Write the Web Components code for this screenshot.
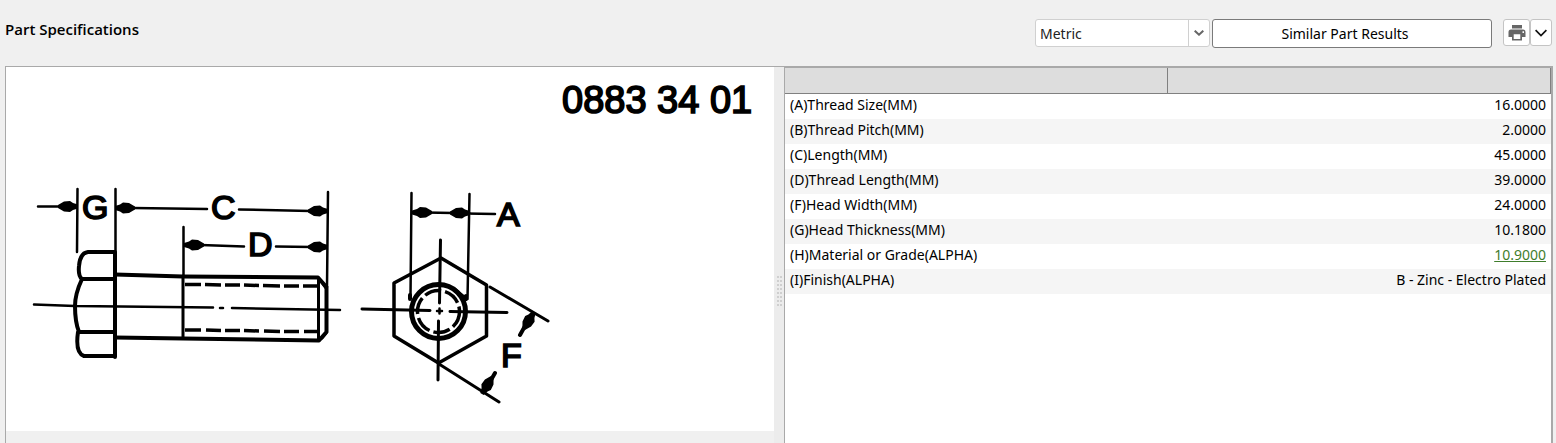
<!DOCTYPE html>
<html lang="en">
<head>
<meta charset="utf-8">
<title>Part Specifications</title>
<style>
    body {
        margin: 0;
        background: #f0f0f0;
        color: #000;
        font: 14px/20px "Noto Sans", sans-serif;
    }
</style>
</head>
<body>
<part-page>
    <spec-toolbar slot="toolbar">Part Specifications</spec-toolbar>
    <bolt-drawing slot="drawing" number="0883 34 01"></bolt-drawing>
    <spec-table slot="specs"></spec-table>
</part-page>

<script>
class PartPage extends HTMLElement {

    constructor() {
        super();
        this.attachShadow({ mode: "open" }).innerHTML = `
        <style>
            :host {
                display: flex;
                flex-direction: column;
                height: 100vh;
                overflow: hidden;
            }

            .split {
                flex: 1;
                display: grid;
                grid-template-columns: 1fr 10px 1fr;
                margin: 0 3px 0 5px;
                border: 1px solid #a9a9a9;
                border-bottom: 0;
                min-height: 0;
            }

            .splitter {
                display: grid;
                place-content: center;
                padding-top: 72px;
                background: #ececec;
            }

            .grip {
                display: grid;
                grid-template-columns: 2px 2px;
                grid-auto-rows: 2px;
                gap: 2px 1px;
            }

            .grip i {
                background: #cfcfcf;
            }
        </style>
        <slot name="toolbar"></slot>
        <main class="split">
            <slot name="drawing"></slot>
            <div class="splitter"><div class="grip">${"<i></i>".repeat(16)}</div></div>
            <slot name="specs"></slot>
        </main>`;
    }
}

class SpecToolbar extends HTMLElement {

    constructor() {
        super();
        this.attachShadow({ mode: "open" }).innerHTML = `
        <style>
            * {
                box-sizing: border-box;
            }

            :host {
                display: flex;
                justify-content: space-between;
                align-items: flex-start;
                height: 66px;
                padding: 19px 4px 0 5px;
                box-sizing: border-box;
            }

            h1 {
                margin: 0;
                font: 600 15px/20px "Open Sans", sans-serif;
            }

            .tools {
                display: flex;
                gap: 2px;
            }

            .units {
                display: grid;
                grid-template-columns: 1fr 21px;
                width: 175px;
                height: 28px;
                border: 1px solid #d0d0d0;
                border-radius: 3px;
                background: #fff;
            }

            select {
                grid-area: 1 / 1 / 2 / 3;
                appearance: none;
                border: 0;
                padding: 2px 24px 0 4px;
                background: none;
                color: #222;
                font: inherit;
            }

            .arrow {
                grid-area: 1 / 2;
                display: grid;
                place-items: center;
                border-left: 1px solid #d0d0d0;
                pointer-events: none;
            }

            button {
                display: grid;
                place-items: center;
                padding: 0;
                border: 1px solid #c4c4c4;
                border-radius: 3px;
                background: #fff;
                color: #000;
                font: inherit;
            }

            .similar {
                width: 280px;
                height: 29px;
                padding-right: 14px;
                border-color: #7a7a7a;
            }

            .print {
                display: flex;
                margin-left: 9px;
            }

            .print button {
                width: 22px;
                height: 27px;
            }

            .print button:first-child {
                width: 27px;
            }
        </style>
        <h1><slot></slot></h1>
        <div class="tools">
            <div class="units">
                <select aria-label="Units"><option>Metric</option><option>Inch</option></select>
                <span class="arrow">
                    <svg width="10" height="6" fill="none" stroke="#666" stroke-width="2"><path d="M.7.7 5 4.700 9.300.7"/></svg>
                </span>
            </div>
            <button class="similar">Similar Part Results</button>
            <div class="print">
                <button aria-label="Print">
                    <svg width="18" height="16" viewBox="0 0 18 16" fill="#666">
                        <path d="M4 0h10v3.500H4z"/>
                        <path fill-rule="evenodd" d="M3 4.500h12a2.500 2.500 0 0 1 2.500 2.500v5H14v3.500H4V12H.5V7A2.500 2.500 0 0 1 3 4.500zM5.700 9.300v4.700h6.600V9.300zM14.500 6.300v1.700h1.500V6.300z"/>
                    </svg>
                </button>
                <button aria-label="Print options">
                    <svg width="12" height="8" fill="none" stroke="#111" stroke-width="1.700"><path d="m.6 1.200 5.400 5.300 5.400-5.300"/></svg>
                </button>
            </div>
        </div>`;
    }
}

class BoltDrawing extends HTMLElement {

    connectedCallback() {
        this.attachShadow({ mode: "open" }).innerHTML = `
        <style>
            :host {
                display: block;
                min-width: 0;
            }

            svg {
                display: block;
                width: 100%;
                background: #fff;
            }

            .ink {
                fill: none;
                stroke: #000;
                stroke-width: 3;
                stroke-linecap: round;
                stroke-linejoin: round;
            }

            .thin {
                stroke-width: 2.500;
            }

            .thick {
                stroke-width: 4;
            }

            .dashes {
                stroke-linecap: butt;
                stroke-width: 3.500;
            }

            text {
                font: 34px "Liberation Sans", sans-serif;
                stroke: #000;
                stroke-width: 1.700;
            }

            .number {
                font-size: 38px;
            }
        </style>
        <svg viewBox="6 67 768 364" role="img" aria-label="Hex bolt dimensions">
            <defs>
                <path id="tip" d="M0-2 5-3.500 8-5.500 14-5 20-1.500V1.500L14 5 8 5.500 5 3.500 0 2z"/>
            </defs>
            <text class="number" x="562" y="113">${this.getAttribute("number")}</text>

            <!-- side view -->
            <g class="ink">
                <path class="thick" d="M115 252H88Q80 253 79 266 78 276 82 279H115M82 279Q75 294 75 306 75 322 79 332H115M78 332Q75 353 84 356H115M115 252V357"/>
                <path class="thick" d="M115 274.500 183 276.500 318 277.500 326.500 287V332L319 340.500 183 338.500 115 337.500"/>
                <path d="M318.500 278V340M183 276V338"/>
                <path class="dashes" d="M185 284.500h16m4 0 16 .5m4 0h15m4 0 15 .5m4 0 17 .5m4 0h15m4 0h17M185 330h16m5 0 15 .5m4 0h15m4 0 15 .5m5 0 16 .5m4 0h15m5 0h16"/>
                <path class="thin" d="M34 304.500 75 306 213 307.500M220 308h3M232 308 340 310"/>
                <path class="thin" d="M77.500 189 77 252M115.500 189V252M328 192 327 287M183.500 227V276"/>
                <path class="thin" d="M38 206.500H60M133 208 207 209M239 209.500 310 211M201 245 244 246.500M276 246.500 312 247"/>
                <path d="M320 280 326 288M322 338 326 333"/>
            </g>
            <use href="#tip" transform="translate(78 206.500) rotate(180)"/>
            <use href="#tip" transform="translate(115 208)"/>
            <use href="#tip" transform="translate(328 211) rotate(180)"/>
            <use href="#tip" transform="translate(184 245)"/>
            <use href="#tip" transform="translate(328 247) rotate(180)"/>
            <text x="82" y="219">G</text>
            <text x="211" y="219">C</text>
            <text x="248" y="256">D</text>

            <!-- end view -->
            <g class="ink">
                <path d="M441 258 486.500 285V336L438.500 363 394 336V283z" stroke-width="3.500"/>
                <circle cx="438.500" cy="311.500" r="27" stroke-width="5"/>
                <circle class="dashes" cx="438.500" cy="311.500" r="21" stroke-dasharray="17 4"/>
                <path d="M440.500 240 439.500 303M438.500 321 438 380M362 309 430 310.500M450 311.500 507 312.500M439.500 311h.1M439 364 499 402M490 287 548 321"/>
                <path class="thin" d="M411.500 193 410.500 297M469.500 194 467.500 299M425 212.500 453 213M465 213.500 495 214M437 311h5M439.500 308.500v5"/>
                <path class="thick" d="M410 295v4M455 290l11 9V296M520 335 525 326M495 373 491 380"/>
            </g>
            <use href="#tip" transform="translate(412 212.500)"/>
            <use href="#tip" transform="translate(470 213) rotate(180)"/>
            <use href="#tip" transform="translate(534 312) rotate(121)"/>
            <use href="#tip" transform="translate(482 394) rotate(-59)"/>
            <text x="497" y="226">A</text>
            <text x="501" y="367">F</text>
        </svg>`;
    }
}

class SpecTable extends HTMLElement {

    constructor() {
        super();
        this.rows = [
            ["(A)Thread Size(MM)", "16.0000"],
            ["(B)Thread Pitch(MM)", "2.0000"],
            ["(C)Length(MM)", "45.0000"],
            ["(D)Thread Length(MM)", "39.0000"],
            ["(F)Head Width(MM)", "24.0000"],
            ["(G)Head Thickness(MM)", "10.1800"],
            ["(H)Material or Grade(ALPHA)", `<a href="#grade">10.9000</a>`],
            ["(I)Finish(ALPHA)", "B - Zinc - Electro Plated"]
        ];
        this.attachShadow({ mode: "open" });
        this.render();
    }

    render() {
        this.shadowRoot.innerHTML = `
        <style>
            :host {
                display: block;
                min-width: 0;
                border: 1px solid #a9a9a9;
                border-bottom: 0;
                background: #fff;
            }

            table {
                width: 100%;
                table-layout: fixed;
                border-collapse: separate;
                border-spacing: 0;
            }

            thead th {
                height: 25px;
                padding: 0;
                background: #ddd;
                border: solid #808080;
                border-width: 0 1px 1px 0;
            }

            tbody th, td {
                height: 25px;
                padding: 0 5px 4px;
                box-sizing: border-box;
                font-weight: normal;
                text-align: left;
            }

            td {
                text-align: right;
            }

            tbody tr:nth-child(even) {
                background: #f5f5f5;
            }

            a {
                color: #3f7d2c;
            }
        </style>
        <table aria-label="Specifications">
            <thead><tr><th></th><th></th></tr></thead>
            <tbody>
                ${this.rows.map(([name, value]) => `<tr><th scope="row">${name}</th><td>${value}</td></tr>`).join("")}
            </tbody>
        </table>`;
    }
}

customElements.define("part-page", PartPage);
customElements.define("spec-toolbar", SpecToolbar);
customElements.define("bolt-drawing", BoltDrawing);
customElements.define("spec-table", SpecTable);
</script>
</body>
</html>
